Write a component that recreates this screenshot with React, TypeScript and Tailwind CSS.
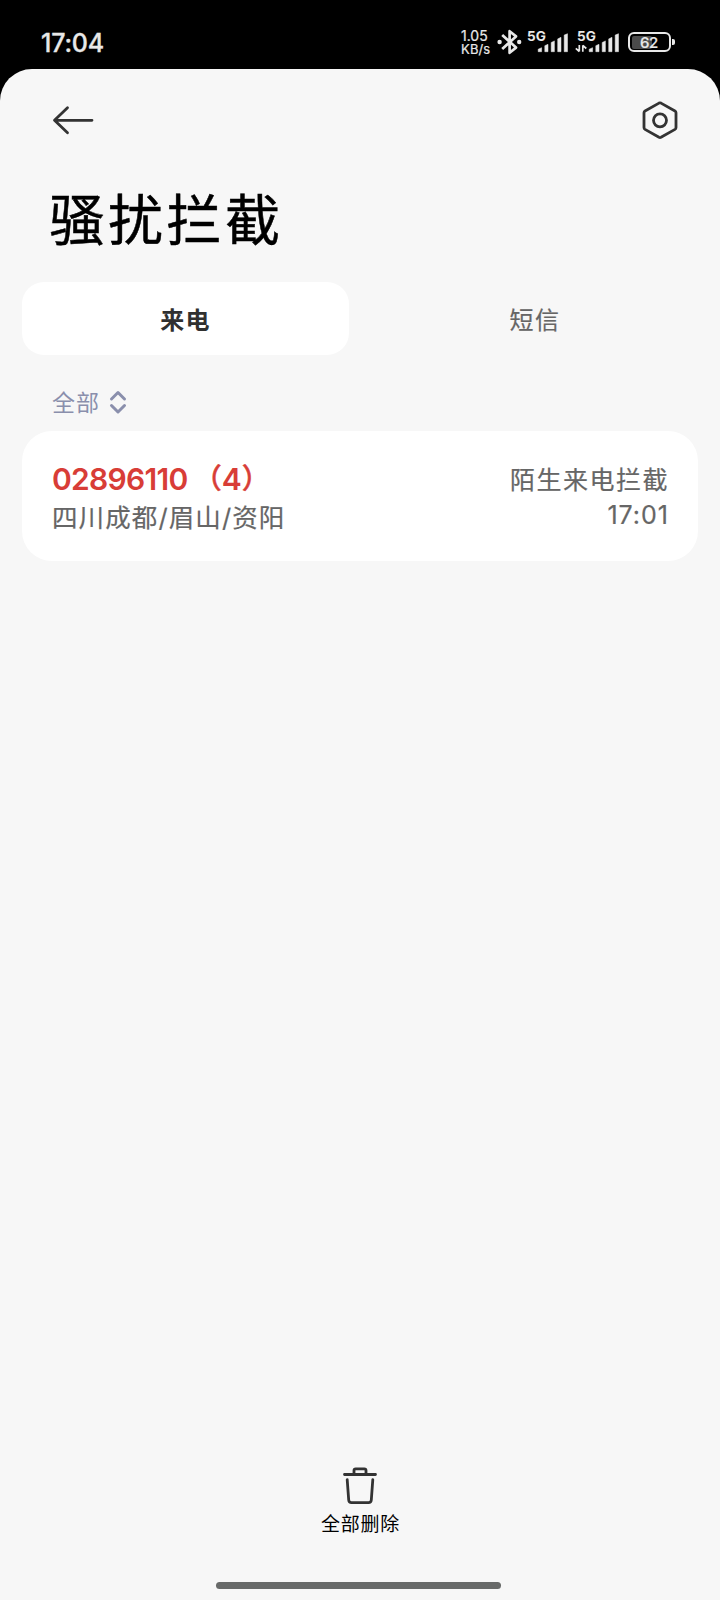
import type { ReactNode } from "react";

function Signal() {
  return (
    <g fill="#e8e8e8" stroke="#e8e8e8" strokeWidth="0.5" strokeLinejoin="round">
      <path d="M.2 15.5 3.600 14V18H.2Z" />
      <path d="M6.800 12 10 10.600V18H6.800Z" />
      <path d="M13.200 8.800 16.400 7.200V18H13.200Z" />
      <path d="M19.700 5.200 23 3.600V18H19.700Z" />
      <path d="M26.200 1.400 29.500 0V18H26.200Z" />
    </g>
  );
}

function Network({ arrows = false }: { arrows?: boolean }) {
  return (
    <div className="relative h-[26px] w-[44px]">
      <span className="absolute left-0 top-[0.5px] text-[13.5px] leading-[13px] font-bold">5G</span>
      <svg className="absolute left-0 top-0 size-full overflow-visible" viewBox="0 0 44 26">
        <g transform={arrows ? "translate(12 4.700)" : "translate(11 4.700)"}>
          <Signal />
        </g>
        {arrows && (
          <g stroke="#e8e8e8" strokeWidth="1.7" fill="none">
            <path d="M2.3 16v6.500M-1.200 19.400l3.500 3.100M5.800 22.700v-6.500M9.300 19.500l-3.500-3.200" />
          </g>
        )}
      </svg>
    </div>
  );
}

function StatusBar() {
  return (
    <div className="flex h-[69px] items-start text-[#e8e8e8]">
      <div className="mt-[28px] ml-[41px] w-[420px] text-[25px] leading-[30px] font-medium tracking-[-0.2px] [-webkit-text-stroke:0.3px_#e8e8e8]">
        17:04
      </div>
      <div className="mt-[29px] flex w-[36px] flex-col gap-px text-[14px] [-webkit-text-stroke:0.2px_#e8e8e8]">
        <div className="h-[13px] leading-[13px]">1.05</div>
        <div className="h-[12px] text-[13px] leading-[12px] tracking-[0.15px]">KB/s</div>
      </div>
      <svg className="mt-[28px] h-[28px] w-[26px]" viewBox="0 0 26 28" fill="none" stroke="#e8e8e8" strokeWidth="2.7">
        <path d="M5.2 7 19 19.600 12.6 24.800V3.200L19 8.400 5.2 21" strokeLinejoin="round" />
        <circle cx="2.6" cy="14" r="2.2" fill="#e8e8e8" stroke="none" />
        <circle cx="22.2" cy="14" r="2.2" fill="#e8e8e8" stroke="none" />
      </svg>
      <div className="mt-[29px] ml-[4px] flex gap-[6px]">
        <Network />
        <Network arrows />
      </div>
      <div className="mt-[32px] ml-[7px] flex items-center gap-[1px]">
        <div className="flex h-[20px] w-[43px] items-center rounded-[6px] border-2 border-[#e8e8e8] p-[2px]">
          <div className="h-[13px] w-[20px] rounded-[2px] bg-[#4a4a4a]" />
          <span className="-ml-[12px] text-[15px] leading-[15px] font-medium tracking-[-0.5px] [-webkit-text-stroke:0.2px_#e8e8e8]">62</span>
        </div>
        <div className="h-[6px] w-[3px] rounded-r-[2px] bg-[#e8e8e8]" />
      </div>
    </div>
  );
}

function Tab({ active = false, children }: { active?: boolean; children: ReactNode }) {
  return (
    <button
      className={
        active
          ? "h-[73px] w-[327px] rounded-[22px] bg-white pt-[4px] text-[24px] font-bold tracking-[1.2px] text-[#303030]"
          : "h-[73px] w-[349px] pt-[4px] pl-[23px] text-[24px] tracking-[1.5px] text-[#666] [-webkit-text-stroke:0.2px_#666]"
      }
    >
      {children}
    </button>
  );
}

export default function App() {
  return (
    <div className="h-[1600px] w-[720px] overflow-hidden bg-black font-['Inter','Noto_Sans_CJK_SC',sans-serif]">
      <StatusBar />
      <main className="flex h-[1531px] flex-col rounded-t-[32px] bg-[#f7f7f7]">
        <header className="flex h-[102px] items-center justify-between pr-[40px] pl-[50px]">
          <svg width="48" height="40" viewBox="0 0 48 40" fill="none" stroke="#333" strokeWidth="2.8" strokeLinecap="round" strokeLinejoin="round">
            <path d="M42 20.300H4.500M17.500 7.800 4.500 20.300l13 12.500" />
          </svg>
          <svg width="40" height="40" viewBox="0 0 40 40" fill="none" stroke="#333" strokeWidth="2.8" strokeLinejoin="round">
            <path d="M19 3.100Q20 2.600 21 3.100L35 11Q36 11.600 36 12.800V27.600Q36 28.800 35 29.400L21 37.300Q20 37.800 19 37.300L5 29.400Q4 28.800 4 27.600V12.800Q4 11.600 5 11Z" />
            <circle cx="20" cy="20.300" r="6.500" />
          </svg>
        </header>
        <h1 className="mt-[9px] h-[80px] pl-[49.5px] text-[55px] leading-[80px] tracking-[3.5px] text-black [-webkit-text-stroke:0.5px_#000]">骚扰拦截</h1>
        <div className="mt-[22px] flex pl-[22px]">
          <Tab active>来电</Tab>
          <Tab>短信</Tab>
        </div>
        <div className="mt-[28px] flex h-[40px] items-center pl-[52px] text-[23px] tracking-[0.9px] text-[#8a8fac]">
          全部
          <svg className="ml-[8px] -mt-[2px]" width="20" height="26" viewBox="0 0 20 26" fill="none" stroke="#8a8fac" strokeWidth="3" strokeLinecap="round" strokeLinejoin="round">
            <path d="m3.500 10 6.500-6.500 6.500 6.500M3.500 16.500l6.500 6.500 6.500-6.500" />
          </svg>
        </div>
        <section className="mx-[22px] mt-[8px] flex h-[130px] justify-between rounded-[30px] bg-white pr-[29px] pl-[30px] text-[#666]">
          <div className="pt-[29px]">
            <div className="flex text-[30px] leading-[38px] font-semibold text-[#d83d37]">
              <span className="tracking-[-0.7px]">02896110</span>
              <span className="ml-[6px] flex text-[30px]">
                <span className="text-[28px] font-medium [-webkit-text-stroke:0.5px_#d83d37]">（</span>
                4
                <span className="text-[28px] font-medium [-webkit-text-stroke:0.5px_#d83d37]">）</span>
              </span>
            </div>
            <div className="pt-[1px] text-[25.5px] leading-[38px] tracking-[1.1px] [-webkit-text-stroke:0.2px_#666]">四川成都/眉山/资阳</div>
          </div>
          <div className="pt-[30px] text-right text-[25px] [-webkit-text-stroke:0.2px_#666]">
            <div className="leading-[38px] tracking-[1.5px]">陌生来电拦截</div>
            <div className="leading-[32px] tracking-[1px]">17:01</div>
          </div>
        </section>
        <button className="mt-auto flex flex-col items-center">
          <svg width="40" height="42" viewBox="0 0 40 42" fill="none" stroke="#333" strokeWidth="2.8" strokeLinecap="round" strokeLinejoin="round">
            <path d="M4.500 10.500h31M14 10V6.500Q14 4.800 15.700 4.800h8.600Q26 4.800 26 6.500V10M7.200 15.700l1.500 20.300q.2 2.700 2.900 2.700h16.800q2.700 0 2.900-2.700L32.800 15.700" />
          </svg>
          <span className="mt-[5px] pl-[1px] text-[19px] leading-[28px] tracking-[0.8px] text-black">全部删除</span>
        </button>
        <div className="mt-[43px] mb-[11px] ml-[215.5px] h-[7px] w-[285px] rounded-full bg-[#686a69]" />
      </main>
    </div>
  );
}
